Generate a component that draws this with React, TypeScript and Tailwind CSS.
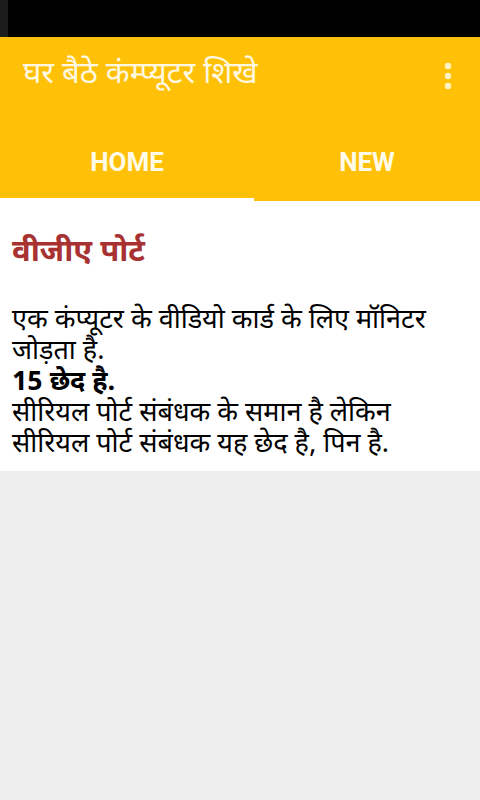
const font = { fontFamily: '"Noto Sans Devanagari", "Noto Sans", Roboto, sans-serif' }

export default function App() {
  return (
    <div className="w-[480px] h-[800px] bg-[#eeeeee] flex flex-col" style={font}>
      {/* status bar */}
      <div className="h-[37px] bg-black flex">
        <div className="w-[8px] bg-[#1c1c1c]" />
      </div>

      {/* app bar */}
      <div className="bg-[#ffc107]">
        <div className="h-[82px] flex items-center justify-between pl-[23px] pr-[28px]">
          <h1 className="text-[31px] leading-[40px] text-[#fff8e1] pb-[4px]">घर बैठे कंम्प्यूटर शिखे</h1>
          <svg width="8" height="28" viewBox="0 0 8 28" className="mb-[4px]">
            <circle cx="4" cy="4" r="3.2" fill="#fff3c4" />
            <circle cx="4" cy="14" r="3.2" fill="#fff3c4" />
            <circle cx="4" cy="24" r="3.2" fill="#fff3c4" />
          </svg>
        </div>
        <div className="h-[82px] flex">
          <div className="w-[254px] flex flex-col">
            <div className="flex-1 flex items-center justify-center text-[26px] font-bold text-[#fffbe9] pt-[8px]" style={{ fontFamily: "Roboto, sans-serif" }}>
              HOME
            </div>
            <div className="h-[3px] bg-white" />
          </div>
          <div className="flex-1 flex items-center justify-center text-[26px] font-bold text-[#fffbe9] pt-[8px] pb-[3px]" style={{ fontFamily: "Roboto, sans-serif" }}>
            NEW
          </div>
        </div>
      </div>

      {/* content */}
      <div className="bg-white px-[12px] pt-[32px] pb-[10px]">
        <h2 className="text-[31px] font-bold text-[#a83232] leading-[42px]">वीजीए पोर्ट</h2>
        <div className="mt-[31px] text-[27px] leading-[31px] text-black">
          <p>एक कंप्यूटर के वीडियो कार्ड के लिए मॉनिटर जोड़ता है.</p>
          <p className="font-bold">15 छेद है.</p>
          <p>
            सीरियल पोर्ट संबंधक के समान है लेकिन
            <br />
            सीरियल पोर्ट संबंधक यह छेद है, पिन है.
          </p>
        </div>
      </div>
    </div>
  )
}
